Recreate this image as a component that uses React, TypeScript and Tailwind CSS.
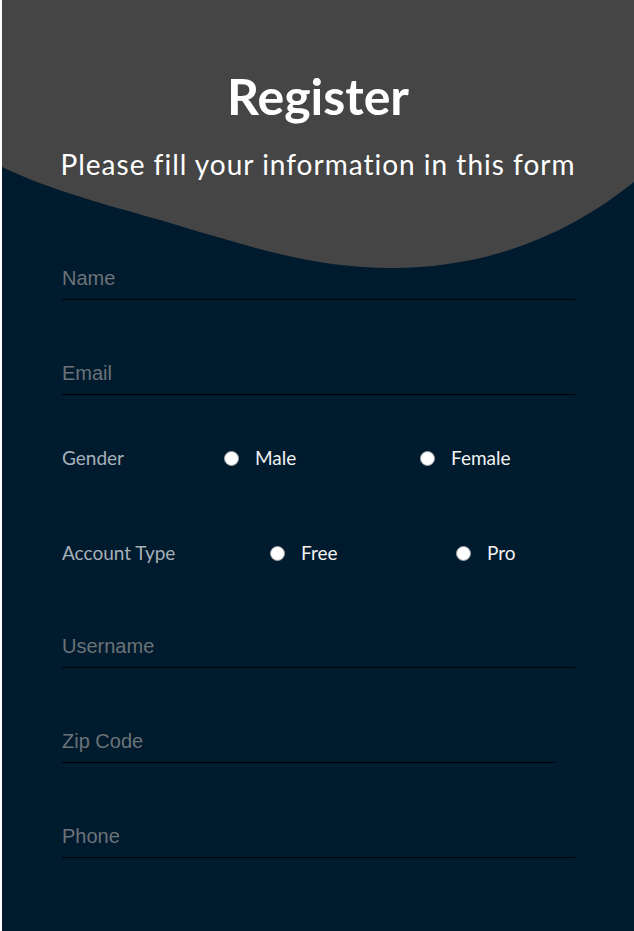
import React from "react";

const Field: React.FC<{ placeholder: string; className?: string }> = ({
  placeholder,
  className,
}) => {
  return (
    <input
      type="text"
      placeholder={placeholder}
      className={`block h-[38px] pb-[5px] bg-transparent border-b border-black outline-none text-[20px] text-white placeholder:text-[#6b7278] ${className ?? ""}`}
      style={{ fontFamily: '"Liberation Sans", Arial, sans-serif' }}
    />
  );
};

const Radio: React.FC<{ label: string; className?: string }> = ({
  label,
  className,
}) => {
  return (
    <label className={`flex items-center gap-[16px] ${className ?? ""}`}>
      <span className="w-[15px] h-[15px] rounded-full bg-white border border-[#9aa0a6]" />
      <span className="text-[19px] text-[#f2f2f2]">{label}</span>
    </label>
  );
};

export default function App() {
  return (
    <div className="w-full h-[931px] bg-white pl-[2px]">
      <div
        className="relative h-full bg-[#001b2e] overflow-hidden"
        style={{ fontFamily: "Lato, 'Noto Sans', sans-serif" }}
      >
        <svg
          className="absolute left-0 top-0"
          width="632"
          height="280"
          viewBox="0 0 632 280"
        >
          <path
            d="M0,0 L632,0 L632,182 C570,232 490,268 390,268 C300,268 230,240 140,215 C80,198 40,186 0,167 Z"
            fill="#454545"
          />
        </svg>

        <div className="relative flex flex-col items-center pt-[64px]">
          <h1 className="text-[50px] leading-[64px] font-bold text-white">
            Register
          </h1>
          <p className="mt-[18px] text-[28px] leading-[36px] tracking-[1px] text-white">
            Please fill your information in this form
          </p>
        </div>

        <form className="relative px-[60px] pt-[80px]">
          <Field placeholder="Name" className="w-[513px]" />
          <Field placeholder="Email" className="w-[513px] mt-[57px]" />

          <div className="flex items-center h-[30px] mt-[48px]">
            <span className="w-[162px] text-[19px] text-[#a7b0b9]">Gender</span>
            <Radio label="Male" className="w-[196px]" />
            <Radio label="Female" />
          </div>

          <div className="flex items-center h-[30px] mt-[65px]">
            <span className="w-[208px] text-[19px] text-[#a7b0b9]">
              Account Type
            </span>
            <Radio label="Free" className="w-[186px]" />
            <Radio label="Pro" />
          </div>

          <Field placeholder="Username" className="w-[513px] mt-[62px]" />
          <Field placeholder="Zip Code" className="w-[493px] mt-[57px]" />
          <Field placeholder="Phone" className="w-[513px] mt-[57px]" />
        </form>
      </div>
    </div>
  );
}
